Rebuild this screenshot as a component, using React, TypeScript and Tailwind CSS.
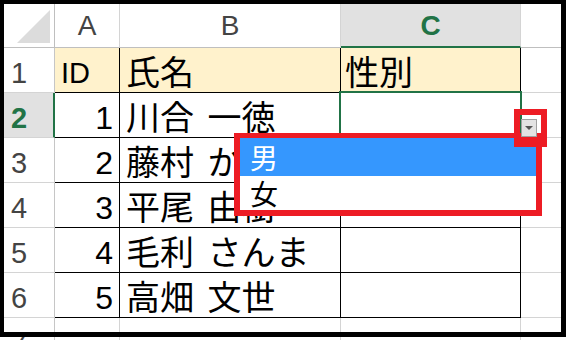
import React from 'react'

const LATIN = "font-['Liberation_Sans','Noto_Sans_CJK_JP',sans-serif]"
const JP = "font-['Noto_Sans_CJK_JP',sans-serif]"

interface SheetRow {
  n: number
  h: string
  id: string
  name: string
}

const rows: SheetRow[] = [
  { n: 1, h: 'h-[45px]', id: 'ID', name: '氏名' },
  { n: 2, h: 'h-[45px]', id: '1', name: '川合 一徳' },
  { n: 3, h: 'h-[45px]', id: '2', name: '藤村 かおり' },
  { n: 4, h: 'h-[45px]', id: '3', name: '平尾 由樹' },
  { n: 5, h: 'h-[45px]', id: '4', name: '毛利 さんま' },
  { n: 6, h: 'h-[45px]', id: '5', name: '高畑 文世' },
  { n: 7, h: 'h-[45px]', id: '', name: '' },
]

function ColumnHeader() {
  return (
    <div className={`flex h-[44px] ${LATIN}`}>
      <div className="w-[51px] shrink-0 border-r border-b border-[#bfbfbf] bg-white">
        <svg width="50" height="43" className="block">
          <polygon points="46,6 46,39 13,39" fill="#dcdcdc" />
        </svg>
      </div>
      <div className="flex w-[65px] shrink-0 items-end justify-center border-r border-b border-r-[#d4d4d4] border-b-[#bfbfbf] bg-white pb-[7px] text-[28px] leading-none text-[#444]">
        A
      </div>
      <div className="flex w-[221px] shrink-0 items-end justify-center border-r border-b border-r-[#d4d4d4] border-b-[#bfbfbf] bg-white pb-[7px] text-[28px] leading-none text-[#444]">
        B
      </div>
      <div className="flex w-[180px] shrink-0 items-end justify-center border-r border-b-2 border-r-[#d4d4d4] border-b-[#217346] bg-[#e1e1e1] pb-[6px] text-[28px] font-bold leading-none text-[#217346]">
        C
      </div>
      <div className="w-[60px] shrink-0 border-b border-[#bfbfbf] bg-white" />
    </div>
  )
}

function DataRow({ row }: { row: SheetRow }) {
  const inTable = row.n <= 6
  const active = row.n === 2
  const head = row.n === 1
  const line = inTable ? 'border-black' : 'border-[#d4d4d4]'

  return (
    <div className={`flex ${row.h}`}>
      <div
        className={
          active
            ? `flex w-[51px] shrink-0 items-end border-r-2 border-b border-r-[#217346] border-b-[#d4d4d4] bg-[#e1e1e1] pb-[4px] pl-[7px] text-[29px] font-bold leading-none text-[#217346] ${LATIN}`
            : `flex w-[51px] shrink-0 items-end border-r border-b border-r-[#c6c6c6] border-b-[#d4d4d4] bg-white pb-[4px] pl-[7px] text-[29px] leading-none text-[#444] ${LATIN}`
        }
      >
        {row.n}
      </div>
      <div
        className={`flex w-[65px] shrink-0 items-end border-r border-b ${line} ${head ? 'bg-[#fff2cc] justify-start pl-[6px] pb-[4px] text-[29px]' : 'bg-white justify-end pr-[6px] pb-[3px] text-[32px]'} leading-none text-black ${LATIN}`}
      >
        {row.id}
      </div>
      <div
        className={`flex w-[221px] shrink-0 items-end whitespace-nowrap border-r border-b ${line} ${head ? 'bg-[#fff2cc]' : 'bg-white'} pb-[4px] pl-[6px] text-[34px] leading-none text-black [word-spacing:6px] ${JP}`}
      >
        {row.name}
      </div>
      <div
        className={`flex w-[180px] shrink-0 items-end border-r border-b ${line} ${head ? 'bg-[#fff2cc]' : 'bg-white'} pb-[4px] pl-[4px] text-[34px] leading-none text-black ${JP}`}
      >
        {head ? '性別' : ''}
      </div>
      <div className="w-[60px] shrink-0 border-b border-[#d4d4d4] bg-white" />
    </div>
  )
}

export default function App() {
  return (
    <div className="relative h-[340px] w-[566px] overflow-hidden bg-white">
      <div className="pl-[4px] pt-[4px]">
        <ColumnHeader />
        {rows.map((row) => (
          <DataRow key={row.n} row={row} />
        ))}
      </div>

      {/* selected cell C2 */}
      <div className="absolute left-[339px] top-[91px] h-[49px] w-[183px] border-2 border-[#217346]" />

      {/* validation list */}
      <div className={`absolute left-[234px] top-[133px] w-[308px] border-x-[6px] border-t-[5px] border-b-[6px] border-[#ed1c24] bg-white ${JP}`}>
        <div className="flex h-[38px] items-center bg-[#3597fe] pl-[10px] text-[28px] leading-none text-white">男</div>
        <div className="flex h-[34px] items-center pl-[10px] text-[28px] leading-none text-black">女</div>
      </div>

      {/* dropdown button */}
      <div className="absolute left-[521px] top-[119px] flex h-[18px] w-[16px] items-center justify-center border border-[#a0a0a0] bg-[#e3e3e3]">
        <svg width="8" height="4" viewBox="0 0 8 4">
          <polygon points="0,0 8,0 4,4" fill="#555" />
        </svg>
      </div>
      <div className="absolute left-[514px] top-[109px] h-[38px] w-[33px] border-x-[6px] border-t-[6px] border-b-[9px] border-[#ed1c24]" />

      {/* screenshot frame */}
      <div className="pointer-events-none absolute left-0 top-0 h-[337px] w-[566px] border-t-4 border-l-4 border-r-[5px] border-b-[5px] border-black" />
    </div>
  )
}
